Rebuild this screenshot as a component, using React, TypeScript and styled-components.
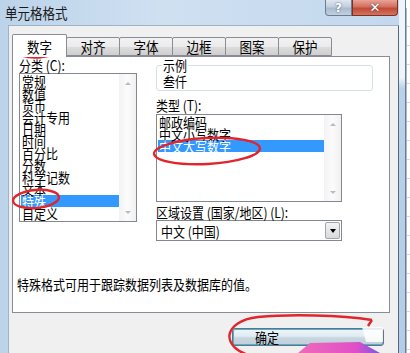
import React from 'react';
import styled, { createGlobalStyle } from 'styled-components';

const GlobalStyle = createGlobalStyle`
  html, body {
    margin: 0;
    padding: 0;
  }
  body {
    width: 410px;
    height: 353px;
    overflow: hidden;
    background: #ffffff;
    font-family: "Noto Sans CJK SC", "Liberation Sans", sans-serif;
    color: #000;
  }
`;

const Screen = styled.div`
  position: relative;
  width: 410px;
  height: 353px;
  display: flex;
  overflow: hidden;
`;

const Window = styled.div`
  width: 399px;
  display: flex;
  flex-direction: column;
  background: linear-gradient(90deg, #bcd3ea 0%, #cfe0f1 40%, #c3d8ee 100%);
`;

const TitleBar = styled.div`
  height: 25px;
  display: flex;
  align-items: flex-start;
  padding-left: 5px;
`;

const Title = styled.div`
  font-size: 12.5px;
  line-height: 12px;
  margin-top: 7px;
  color: #1a1a1a;
`;

const CaptionButtons = styled.div`
  margin-left: auto;
  display: flex;
  margin-right: 1px;
`;

const CaptionButton = styled.div<{ $close?: boolean }>`
  width: ${({ $close }) => ($close ? '46px' : '27px')};
  height: 16px;
  box-sizing: border-box;
  border: 1px solid ${({ $close }) => ($close ? '#7a3128' : '#6d7d90')};
  border-top: none;
  border-radius: ${({ $close }) => ($close ? '0 0 4px 0' : '0 0 0 4px')};
  background: ${({ $close }) =>
    $close
      ? 'linear-gradient(180deg, #e8a397 0%, #d2705f 45%, #c24a36 55%, #d0765f 100%)'
      : 'linear-gradient(180deg, #dfe7f0 0%, #c2cfdd 45%, #a9bbcf 55%, #c2d1e1 100%)'};
  display: flex;
  align-items: center;
  justify-content: center;
  color: #fff;
  font-family: "DejaVu Sans", sans-serif;
  font-weight: bold;
  font-size: ${({ $close }) => ($close ? '13px' : '12px')};
  text-shadow: 0 0 2px #3a4a60;
`;

const Frame = styled.div`
  flex: 1;
  display: flex;
  padding-left: 8px;
`;

const Client = styled.div`
  flex: 1;
  background: #f0f0f0;
  border-left: 1px solid #9fb3c8;
  border-right: 1px solid #57677a;
  border-top: 1px solid #9fb3c8;
  padding: 7px 0 0 3px;
  display: flex;
  flex-direction: column;
`;

const Tabs = styled.div`
  display: flex;
  align-items: flex-end;
  height: 23px;
`;

const Tab = styled.div<{ $active?: boolean }>`
  position: relative;
  z-index: ${({ $active }) => ($active ? 2 : 1)};
  box-sizing: border-box;
  width: ${({ $active }) => ($active ? '55px' : '54px')};
  height: ${({ $active }) => ($active ? '23px' : '19px')};
  margin-bottom: ${({ $active }) => ($active ? '-1px' : '0')};
  margin-left: ${({ $active }) => ($active ? '0' : '-1px')};
  border: 1px solid #898c95;
  border-bottom: ${({ $active }) => ($active ? 'none' : '1px solid #898c95')};
  border-radius: 2px 2px 0 0;
  background: ${({ $active }) =>
    $active ? '#ffffff' : 'linear-gradient(180deg, #f2f2f2 0%, #ebebeb 50%, #dddddd 51%, #cfcfcf 100%)'};
  display: flex;
  justify-content: center;
  align-items: center;
  font-size: 12.5px;
  padding-top: ${({ $active }) => ($active ? '1px' : '0')};
`;

const Panel = styled.div`
  width: 378px;
  height: 257px;
  box-sizing: border-box;
  background: #ffffff;
  border: 1px solid #898c95;
  padding: 1px 0 0 6px;
  display: flex;
  flex-direction: column;
`;

const Columns = styled.div`
  display: flex;
`;

const LeftCol = styled.div`
  width: 118px;
  display: flex;
  flex-direction: column;
`;

const RightCol = styled.div`
  margin-left: 19px;
  width: 217px;
  display: flex;
  flex-direction: column;
`;

const Txt = styled.span`
  display: inline-block;
  transform: scaleY(1.15);
  transform-origin: 50% 55%;
  white-space: nowrap;
`;

const Label = styled.div<{ $top?: number }>`
  font-size: 12px;
  line-height: 14px;
  margin-top: ${({ $top }) => $top ?? 0}px;
  color: #000;
`;

const ListBox = styled.div<{ $w: number; $h: number; $top?: number }>`
  width: ${({ $w }) => $w}px;
  height: ${({ $h }) => $h}px;
  margin-top: ${({ $top }) => $top ?? 0}px;
  box-sizing: border-box;
  border: 1px solid #828790;
  display: flex;
  background: #fff;
`;

const Items = styled.div`
  flex: 1;
  padding: 1px 0 0 1px;
  overflow: hidden;
`;

const Item = styled.div<{ $sel?: boolean }>`
  height: 12px;
  line-height: 12px;
  font-size: 12px;
  padding-left: 1px;
  background: ${({ $sel }) => ($sel ? '#3399ff' : 'transparent')};
  color: ${({ $sel }) => ($sel ? '#ffffff' : '#000000')};
`;

const ScrollBar = styled.div`
  width: 17px;
  display: flex;
  flex-direction: column;
  justify-content: space-between;
  align-items: center;
  background: linear-gradient(90deg, #f3f3f3 0%, #fbfbfb 50%, #f0f0f0 100%);
  padding: 8px 0 7px;
  box-sizing: border-box;
`;

const Arrow = styled.div<{ $down?: boolean }>`
  width: 0;
  height: 0;
  border-left: 3px solid transparent;
  border-right: 3px solid transparent;
  ${({ $down }) => ($down ? 'border-top: 3px solid #b8bcc2;' : 'border-bottom: 3px solid #b8bcc2;')}
`;

const Sample = styled.fieldset`
  margin: 0;
  padding: 2px 6px 3px 6px;
  width: 217px;
  height: 33px;
  box-sizing: border-box;
  border: 1px solid #d5dfe5;
  border-radius: 3px;
  font-size: 12px;
  line-height: 14px;
`;

const Legend = styled.legend`
  padding: 0 1px;
  margin-left: -1px;
  font-size: 12px;
  line-height: 14px;
`;

const Select = styled.div`
  width: 186px;
  height: 21px;
  margin-top: 1px;
  box-sizing: border-box;
  border: 1px solid #828790;
  display: flex;
  align-items: center;
  font-size: 12px;
  padding-left: 4px;
  padding-right: 1px;
  background: #fff;
`;

const SelectArrow = styled.div`
  margin-left: auto;
  width: 15px;
  height: 17px;
  box-sizing: border-box;
  border: 1px solid #a0a6ad;
  border-radius: 2px;
  background: linear-gradient(180deg, #f4f4f4 0%, #e6e6e6 50%, #d9d9d9 100%);
  display: flex;
  align-items: center;
  justify-content: center;
`;

const BlackArrow = styled.div`
  width: 0;
  height: 0;
  border-left: 3.5px solid transparent;
  border-right: 3.5px solid transparent;
  border-top: 4px solid #000;
`;

const Description = styled.div`
  margin-top: 36px;
  margin-left: -2px;
  font-size: 12px;
  line-height: 14px;
`;

const ButtonRow = styled.div`
  display: flex;
  padding-left: 220px;
  margin-top: 15px;
`;

const OkButton = styled.div`
  width: 152px;
  height: 18px;
  box-sizing: border-box;
  border: 1px solid #707070;
  border-radius: 3px;
  box-shadow: inset 0 0 0 1px #47b1e0;
  background: linear-gradient(180deg, #eef6fb 0%, #e0ebf3 45%, #c8d6e0 55%, #bfcfda 100%);
  font-size: 12px;
  line-height: 16px;
  padding-left: 22px;
`;

const RightFrame = styled.div`
  width: 6px;
  background: linear-gradient(180deg, #eef4fa 0%, #eef4fa 22%, #b9d1ea 25%, #b3cde8 100%);
  border-right: 1px solid #6b7d90;
`;

const SheetEdge = styled.div`
  flex: 1;
  margin-top: 8px;
  border-left: 1px solid #b0b8c0;
  background: repeating-linear-gradient(180deg, #ffffff 0px, #ffffff 18px, #d0d7e0 18px, #d0d7e0 19px);
`;

const Marks = styled.svg`
  position: absolute;
  left: 0;
  top: 0;
  pointer-events: none;
`;

const categories = ['常规', '数值', '货币', '会计专用', '日期', '时间', '百分比', '分数', '科学记数', '文本', '特殊', '自定义'];
const types = ['邮政编码', '中文小写数字', '中文大写数字'];
const tabs = ['数字', '对齐', '字体', '边框', '图案', '保护'];

export default function App() {
  return (
    <>
      <GlobalStyle />
      <Screen>
        <Window>
          <TitleBar>
            <Title><Txt>单元格格式</Txt></Title>
            <CaptionButtons>
              <CaptionButton>?</CaptionButton>
              <CaptionButton $close>✕</CaptionButton>
            </CaptionButtons>
          </TitleBar>
          <Frame>
            <Client>
              <Tabs>
                {tabs.map((t, i) => (
                  <Tab key={t} $active={i === 0}><Txt>{t}</Txt></Tab>
                ))}
              </Tabs>
              <Panel>
                <Columns>
                  <LeftCol>
                    <Label><Txt>分类 (C):</Txt></Label>
                    <ListBox $w={118} $h={149} $top={1}>
                      <Items>
                        {categories.map((c) => (
                          <Item key={c} $sel={c === '特殊'}><Txt>{c}</Txt></Item>
                        ))}
                      </Items>
                      <ScrollBar>
                        <Arrow />
                        <Arrow $down />
                      </ScrollBar>
                    </ListBox>
                  </LeftCol>
                  <RightCol>
                    <Sample>
                      <Legend><Txt>示例</Txt></Legend>
                      <Txt>叁仟</Txt>
                    </Sample>
                    <Label $top={7}><Txt>类型 (T):</Txt></Label>
                    <ListBox $w={186} $h={88} $top={2}>
                      <Items>
                        {types.map((t) => (
                          <Item key={t} $sel={t === '中文大写数字'}><Txt>{t}</Txt></Item>
                        ))}
                      </Items>
                      <ScrollBar>
                        <Arrow />
                        <Arrow $down />
                      </ScrollBar>
                    </ListBox>
                    <Label $top={3}><Txt>区域设置 (国家/地区) (L):</Txt></Label>
                    <Select>
                      <Txt>中文 (中国)</Txt>
                      <SelectArrow><BlackArrow /></SelectArrow>
                    </Select>
                  </RightCol>
                </Columns>
                <Description><Txt>特殊格式可用于跟踪数据列表及数据库的值。</Txt></Description>
              </Panel>
              <ButtonRow>
                <OkButton><Txt>确定</Txt></OkButton>
              </ButtonRow>
            </Client>
          </Frame>
        </Window>
        <RightFrame />
        <SheetEdge />
        <Marks width="410" height="353" viewBox="0 0 410 353">
          <defs>
            <linearGradient id="scrib" x1="0" y1="0" x2="1" y2="0">
              <stop offset="0" stopColor="#f06ab8" />
              <stop offset="0.7" stopColor="#e050c8" />
              <stop offset="1" stopColor="#7a58e0" />
            </linearGradient>
          </defs>
          <path d="M298 353 L310 343 L360 342 L380 353 Z" fill="url(#scrib)" />
          <path d="M362 327 L383 327 L383 342 L366 342 Z" fill="#ffffff" opacity="0.85" />
          <g fill="none" stroke="#e0262c" strokeWidth="2.4">
            <ellipse cx="38" cy="47" rx="23" ry="10.5" transform="rotate(-4 38 47)" />
            <ellipse cx="36" cy="199" rx="23" ry="9" transform="rotate(-5 36 199)" />
            <ellipse cx="207" cy="151" rx="53" ry="13" transform="rotate(-3 207 151)" />
            <path d="M372 320 C340 315 290 314 258 317 C222 321 220 348 252 356 M372 320 L368 326" />
          </g>
        </Marks>
      </Screen>
    </>
  );
}
